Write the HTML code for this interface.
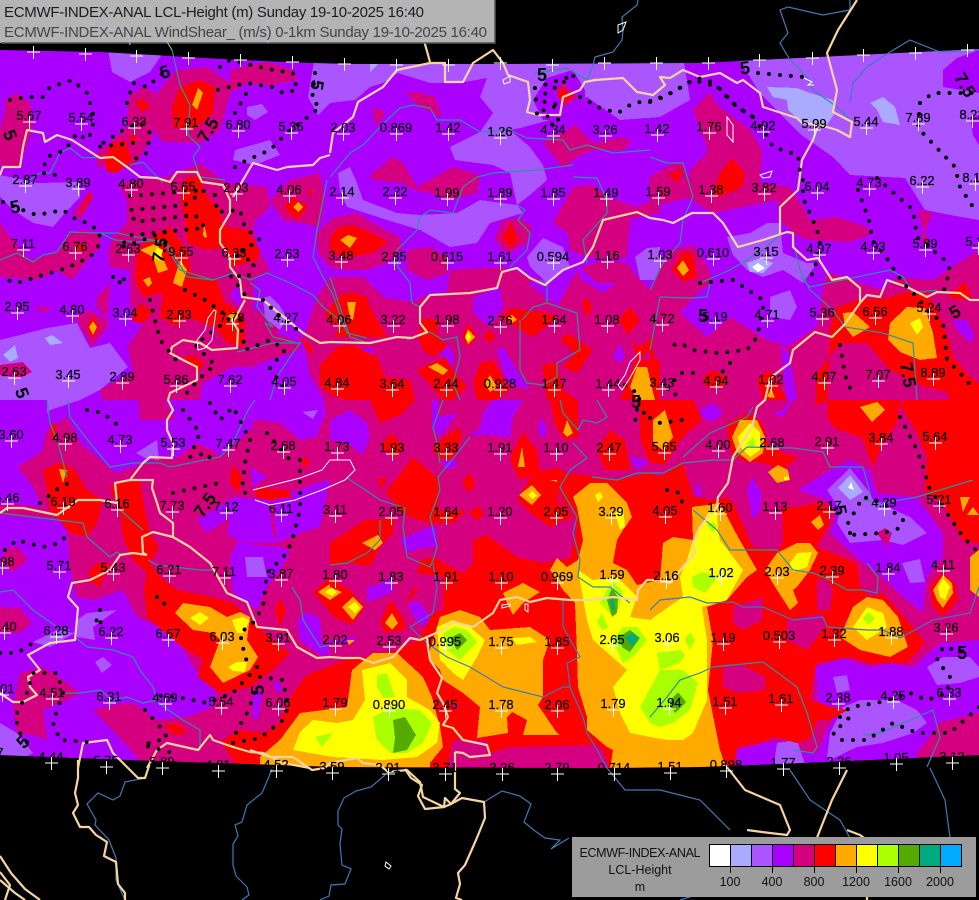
<!DOCTYPE html>
<html><head><meta charset="utf-8"><title>ECMWF-INDEX-ANAL</title>
<style>
html,body{margin:0;padding:0;background:#000;width:979px;height:900px;overflow:hidden}
svg{display:block;position:absolute;left:0;top:0}
text{font-family:"Liberation Sans",sans-serif}
.lb text{font-size:13px;fill:#000;stroke:#000;stroke-width:.2;text-anchor:middle}
.b5 text{font-size:18px;font-weight:bold;fill:#000;text-anchor:middle}
</style></head><body>
<svg width="979" height="900" viewBox="0 0 979 900" xmlns="http://www.w3.org/2000/svg">
<defs><clipPath id="f"><polygon points="0,50 100,52 170,56 240,60 310,63 350,64 500,64 700,63 800,58 900,53 979,49 979,755 800,763 700,767 600,768 340,767 130,760 0,755"/></clipPath></defs>
<rect width="979" height="900" fill="#000"/>
<g clip-path="url(#f)" shape-rendering="crispEdges">
<rect width="979" height="900" fill="#a0f"/>
<g fill="#a5f">
<polygon points="108,50 165,50 150,72 130,82 112,72"/>
<polygon points="0,175 37,183 80,182 80,197 65,213 53,227 33,223 13,210 0,197"/>
<polygon points="0,340 20,335 47,328 77,323 90,348 110,343 128,367 100,390 80,400 50,410 40,420 40,445 0,450"/>
<polygon points="315,55 683,55 690,100 660,117 620,120 587,97 550,120 520,128 510,130 530,147 543,165 547,180 530,195 517,205 480,200 457,213 420,215 397,213 363,200 357,183 350,167 338,173 340,190 347,207 387,220 420,230 450,247 477,243 490,223 523,213 517,205 510,173 493,165 455,160 450,147 480,132 493,113 480,97 487,78 460,83 430,83 398,73 383,83 370,87 355,100 330,103 318,115 308,97"/>
<polygon points="690,50 979,45 979,220 950,215 925,210 905,178 850,175 833,157 800,134 760,93 733,50"/>
<polygon points="527,257 543,238 563,247 570,267 547,283 530,267"/>
<polygon points="635,257 647,248 660,247 660,280 640,280"/>
<polygon points="727,237 750,233 767,223 780,223 783,253 807,263 817,263 803,283 783,270 763,277 747,270 733,255"/>
<polygon points="770,297 790,290 797,307 790,320 770,317"/>
<polygon points="250,150 265,146 278,150 262,162 248,158"/>
<polygon points="235,150 270,140 280,155 255,165 233,160"/>
<polygon points="247,107 262,104 268,112 255,120 247,115"/>
</g>
<g fill="#aaf">
<polygon points="767,87 797,88 810,93 833,100 835,113 827,125 803,123 788,110 787,100 773,97"/>
<polygon points="870,103 883,97 895,107 900,125 883,122 877,110"/>
<polygon points="3,355 15,345 18,358 10,362"/>
<polygon points="45,338 52,335 63,343 50,345"/>
<polygon points="747,263 760,258 773,263 763,273 750,272"/>
<polygon points="370,62 380,62 370,72"/>
</g>
<polygon fill="#fff" points="752,267 758,263 765,268 758,272"/>
<g fill="#a0f">
<polygon points="943,70 957,58 979,50 979,93 943,87"/>
<polygon points="970,117 979,115 979,145 973,135"/>
<polygon points="533,100 547,78 573,70 585,90 585,110 563,120 543,120"/>
</g>
<g fill="#d4007f">
<polygon points="0,503 18,467 40,453 47,430 67,417 80,443 97,457 115,473 147,463 160,457 173,460 197,443 213,450 220,433 233,427 260,420 280,423 300,440 317,437 320,427 326,415 323,397 310,375 303,340 317,297 330,277 363,277 385,298 413,302 427,295 447,292 450,270 503,267 540,280 557,307 573,277 583,267 603,260 627,263 637,277 650,290 660,267 670,250 693,245 708,267 712,283 700,290 680,313 707,337 727,320 730,317 767,340 778,343 787,347 817,327 823,290 827,273 847,277 860,283 883,290 897,277 933,280 979,250 979,770 0,770"/>
<polygon points="157,93 177,70 207,67 230,83 230,70 267,62 293,70 297,80 270,85 247,83 230,93 220,130 200,143 163,142 147,120"/>
<polygon points="130,95 143,87 155,92 152,117 153,137 140,157 133,167 97,167 97,153 113,140 127,127 128,107"/>
<polygon points="5,100 17,93 30,103 33,127 25,150 20,167 0,165 0,130 5,110"/>
<polygon points="270,200 290,180 320,173 325,200 320,227 300,223 283,220"/>
<polygon points="127,200 118,183 167,177 200,163 227,183 267,187 270,207 253,223 257,247 270,270 253,280 253,310 283,317 277,333 300,343 300,350 260,363 253,367 233,367 203,383 200,400 103,400 100,390 133,373 128,347 147,317 130,307 130,270 110,267 108,253 113,237 127,223"/>
<polygon points="0,223 10,237 30,260 57,253 70,232 87,230 100,233 100,247 90,257 72,280 57,270 37,280 0,277"/>
<polygon points="73,213 90,190 93,197 80,220"/>
<polygon points="97,297 110,283 107,317 113,327 97,307"/>
<polygon points="75,317 90,310 107,320 108,327 92,347"/>
<polygon points="33,307 53,307 43,312"/>
<polygon points="0,365 23,362 32,372 20,378 0,375"/>
<polygon points="137,388 150,385 165,400 175,420 140,420"/>
<polygon points="370,175 393,157 403,163 417,187 435,177 453,167 480,175 477,193 450,200 430,193 415,190 402,183 373,180"/>
<polygon points="372,110 378,108 385,113 377,127"/>
<polygon points="405,93 418,92 435,97 442,117 420,107"/>
<polygon points="543,143 575,125 593,143 623,137 632,142 623,150 593,150 577,157 563,168"/>
<polygon points="495,237 503,220 520,218 532,227 527,243 510,253 500,247"/>
<polygon points="553,223 573,187 593,185 607,197 637,207 660,197 660,213 638,217 630,220 627,257 613,260 587,257 570,250 568,233"/>
<polygon points="317,233 333,218 357,213 380,227 400,237 402,250 387,263 367,270 343,270 330,267 318,252"/>
<polygon points="407,250 430,247 447,257 448,273 427,280 407,270"/>
<polygon points="693,110 710,92 717,105 750,130 762,150 760,183 790,187 803,207 810,220 837,217 867,227 870,235 850,242 807,240 793,233 780,220 777,200 743,207 713,213 687,197 690,170 707,153 707,147"/>
<polygon points="650,177 670,165 683,163 693,197 680,200 650,207"/>
<polygon points="917,210 933,213 925,230 930,247 922,243 923,227"/>
<polygon points="555,88 563,83 578,97 565,107"/>
</g>
<g fill="#a0f">
<polygon points="0,400 47,400 47,420 43,450 18,467 33,487 43,507 0,503"/>
<polygon points="0,515 60,520 67,530 70,567 77,597 93,600 123,590 137,617 173,633 200,677 217,693 213,707 187,717 157,720 133,703 113,705 93,710 113,727 147,770 0,770"/>
<polygon points="93,420 113,420 147,437 167,433 173,460 153,457 140,463 117,470 97,457 80,440"/>
<polygon points="230,557 237,543 277,547 283,547 290,553 280,570 267,587 257,610 233,593 230,563"/>
<polygon points="197,520 233,497 270,500 272,530 277,543 240,543 227,533 230,517 207,533"/>
<polygon points="273,500 317,483 330,480 320,527 300,533 277,543"/>
<polygon points="103,400 120,400 120,407 110,417 103,410"/>
<polygon points="200,433 213,430 230,427 233,400 250,400 253,427 240,440 220,457 213,450"/>
<polygon points="250,467 267,477 253,487"/>
<polygon points="330,420 350,410 367,423 370,437 363,455 347,443 330,440"/>
<polygon points="432,400 438,400 438,417 457,413 440,437 432,427"/>
<polygon points="483,413 493,400 523,400 513,417 510,438 493,435 470,435 480,428"/>
<polygon points="540,417 547,427 545,438 538,433"/>
<polygon points="442,462 455,458 457,467 445,470"/>
<polygon points="400,540 417,532 427,528 437,528 437,547 420,548 407,553"/>
<polygon points="367,587 378,585 392,575 393,592 380,597 368,602"/>
<polygon points="408,603 420,602 430,617 427,630 413,617"/>
<polygon points="555,617 563,612 570,630 562,633"/>
<polygon points="630,457 638,458 650,462 637,470"/>
<polygon points="297,620 307,612 320,618 322,643 353,637 357,642 327,643 330,655 320,655 300,640"/>
<polygon points="473,297 500,287 503,307 490,327 473,313"/>
<polygon points="527,283 543,280 557,290 550,303 540,293"/>
<polygon points="580,267 597,283 617,283 603,293 587,283 580,280"/>
<polygon points="357,350 372,347 373,355 362,360"/>
<polygon points="440,353 448,345 455,357 450,370"/>
<polygon points="497,350 503,347 517,370 530,390 507,383"/>
<polygon points="613,357 620,343 625,357 619,363"/>
<polygon points="230,297 237,283 242,297 240,307"/>
<polygon points="815,667 843,658 870,667 890,663 913,667 940,643 979,640 979,713 940,722 933,733 917,753 917,770 737,770 737,750 763,743 787,740 807,753 817,753 827,730 837,713 817,700 817,683"/>
<polygon points="798,490 830,470 850,460 870,470 877,493 917,497 943,533 943,557 927,577 923,613 903,597 877,573 863,563 830,533 837,513 827,500"/>
<polygon points="700,410 713,403 723,413 713,422 703,418"/>
<polygon points="747,490 752,477 762,493 760,510 753,520"/>
<polygon points="695,495 698,480 702,495"/>
<polygon points="773,413 783,410 790,400 793,400 783,417"/>
<polygon points="781,345 790,355 797,400 787,400 782,365"/>
<polygon points="953,320 967,320 975,337 970,343 957,330"/>
<polygon points="253,693 263,690 258,720 252,717"/>
<polygon points="273,683 278,680 283,690 277,693"/>
</g>
<g fill="#a5f">
<polygon points="830,733 843,707 860,700 897,700 917,710 927,723 913,733 883,743 857,747 830,760 827,757"/>
<polygon points="927,667 943,657 970,657 979,667 979,677 960,683 937,685"/>
<polygon points="777,743 797,740 807,770 773,770"/>
<polygon points="833,677 847,675 850,690 837,693"/>
<polygon points="827,490 850,468 870,493 873,500 910,517 927,533 903,545 883,540 850,543 837,523 840,510"/>
<polygon points="902,563 920,559 925,582 910,583"/>
<polygon points="245,557 263,557 267,577 247,577"/>
<polygon points="77,620 87,613 117,610 93,627 95,640 77,637"/>
<polygon points="33,642 57,630 75,633 50,647"/>
<polygon points="95,662 103,657 112,665 102,673"/>
<polygon points="136,453 157,440 159,460 145,458"/>
<polygon points="302,412 318,410 313,419"/>
<polygon points="0,723 17,733 33,753 0,770"/>
<polygon points="263,298 270,296 280,306 287,318 280,330 265,318"/>
</g>
<polygon fill="#aaf" points="838,488 850,475 863,492 850,500"/>
<polygon fill="#fff" points="848,488 851,482 854,490"/>
<g fill="#d4007f">
<polygon points="877,533 885,528 892,533 887,548"/>
<polygon points="20,673 43,667 63,680 80,693 67,700 43,710 47,740 33,735 17,733 13,707"/>
<polygon points="7,548 18,547 28,560 13,572 0,563"/>
<polygon points="0,607 20,608 32,623 20,633 0,633"/>
<polygon points="93,710 113,705 133,703 157,720 187,717 213,707 235,705 240,770 150,770"/>
</g>
<g fill="#f00">
<polygon points="43,470 62,462 75,470 87,490 103,500 97,523 87,537 70,533 50,510 47,490"/>
<polygon points="110,488 117,482 140,480 143,500 150,533 159,547 150,563 160,577 177,590 213,597 233,603 257,627 290,653 273,670 250,687 220,693 198,677 203,660 177,643 147,617 144,590 147,573 133,560 123,537 120,513"/>
<polygon points="88,573 97,563 110,563 100,587 92,583"/>
<polygon points="275,610 280,598 286,610 280,627"/>
<polygon points="230,475 233,465 242,477 238,493 230,483"/>
<polygon points="255,490 263,488 287,490 293,497 270,500 257,498"/>
<polygon points="300,462 305,457 310,462 305,468"/>
<polygon points="50,423 55,423 57,433 52,443"/>
<polygon points="163,725 177,723 188,733 173,735"/>
<polygon points="223,740 240,730 263,733 277,727 293,693 307,675 345,660 367,657 397,650 417,640 433,613 443,610 443,577 417,573 420,560 433,557 463,573 473,563 473,540 487,535 517,557 543,563 570,558 577,527 573,510 563,503 560,487 572,473 590,476 617,480 650,473 660,477 683,463 693,497 713,500 727,497 733,503 753,547 777,550 783,543 782,507 797,507 817,503 830,507 830,523 817,547 857,563 860,587 870,597 883,593 913,627 925,643 907,663 870,663 850,657 817,663 813,677 810,700 832,707 848,710 830,720 817,720 813,733 807,740 797,743 773,737 760,743 737,747 733,770 610,770 603,750 597,745 510,747 490,753 487,740 453,740 447,770 240,770 223,745"/>
<polygon points="330,238 338,227 353,225 380,237 388,242 373,253 350,257 330,253"/>
<polygon points="502,238 511,223 519,240 510,248"/>
<polygon points="325,313 340,295 353,292 367,297 370,307 387,337 333,337 340,327 327,320"/>
<polygon points="320,365 337,347 353,345 377,357 385,377 410,380 415,400 400,415 380,423 370,400 345,400 330,395 320,385"/>
<polygon points="418,337 423,318 438,320 437,333 447,347 433,357 423,350"/>
<polygon points="427,365 445,357 453,370 467,387 453,400 443,400 417,370"/>
<polygon points="462,337 468,323 477,337 468,347"/>
<polygon points="484,337 489,329 495,337 489,344"/>
<polygon points="473,383 480,363 493,360 510,390 497,400 477,400"/>
<polygon points="503,317 510,308 543,312 557,317 533,337 517,328"/>
<polygon points="582,303 587,297 592,307 587,318"/>
<polygon points="618,320 630,307 640,320 628,335"/>
<polygon points="542,365 557,362 563,390 577,400 547,400"/>
<polygon points="560,340 567,333 593,350 577,373 563,367 575,353"/>
<polygon points="632,340 638,347 655,337 650,350 637,360"/>
<polygon points="620,400 635,360 660,360 660,400"/>
<polygon points="550,400 578,400 578,437 565,440 555,425"/>
<polygon points="640,400 693,400 702,420 680,440 665,465 650,463 640,440"/>
<polygon points="597,450 610,430 625,440 630,470 605,470"/>
<polygon points="380,445 392,433 403,447 392,457"/>
<polygon points="432,447 458,427 462,437 452,460 437,457"/>
<polygon points="510,457 523,432 537,450 540,472 520,480 513,467"/>
<polygon points="378,478 387,478 382,490"/>
<polygon points="385,493 413,457 440,480 438,510 467,510 453,523 427,523 410,517 398,510 393,500"/>
<polygon points="462,482 469,473 476,483 469,493"/>
<polygon points="469,513 477,506 484,513 477,521"/>
<polygon points="330,543 365,520 395,518 393,533 380,547 370,567 350,563 330,567"/>
<polygon points="313,592 330,578 350,590 365,607 352,625 335,618"/>
<polygon points="380,623 390,600 405,620 405,630 385,633"/>
<polygon points="405,602 415,587 418,590 408,600"/>
<polygon points="533,472 557,468 570,475 560,487 557,503 567,507 573,517 550,527 530,513 517,500"/>
<polygon points="727,423 747,413 763,423 767,443 783,453 798,457 783,470 763,463 750,462 733,457 727,433"/>
<polygon points="930,587 942,572 955,583 958,600 943,617 933,607"/>
<polygon points="830,327 837,307 857,300 887,298 907,292 927,293 937,310 948,337 953,357 970,377 979,383 979,400 950,400 947,390 917,383 890,370 867,343 840,343 817,373 815,405 830,400 900,400 898,415 897,423 883,443 873,467 862,438 835,428 827,417"/>
<polygon points="917,385 979,383 979,543 963,540 943,503 925,493 927,457 917,433 900,405"/>
<polygon points="947,297 965,282 972,297 960,300"/>
<polygon points="668,175 683,168 678,183"/>
<polygon points="713,193 720,173 732,158 745,173 742,187 720,197"/>
<polygon points="672,270 682,252 693,253 697,277 683,282"/>
<polygon points="702,378 713,370 728,378 723,387 708,388"/>
<polygon points="757,378 770,370 787,400 763,400"/>
<polygon points="650,333 658,377 650,383"/>
<polygon points="172,107 180,87 200,80 215,87 213,113 193,130 173,127"/>
<polygon points="135,103 143,98 150,108 142,112"/>
<polygon points="105,157 113,143 125,140 132,160 117,173 107,172"/>
<polygon points="129,137 133,133 137,140 133,145"/>
<polygon points="180,190 187,177 200,177 207,197 220,210 222,223 227,227 247,230 260,250 257,260 233,267 230,263 227,247 207,250 187,243 185,220 182,207"/>
<polygon points="137,250 157,233 170,227 187,250 192,273 217,280 230,317 213,327 187,317 177,327 160,317 163,293 143,297 135,280"/>
<polygon points="132,313 142,303 152,313 143,323 133,322"/>
<polygon points="215,313 227,303 240,313 245,320 245,347 227,343 217,330"/>
<polygon points="183,357 193,355 205,363 197,372"/>
<polygon points="283,207 293,197 308,207 297,220"/>
<polygon points="308,190 312,190 311,198"/>
<polygon points="80,213 90,193 92,197 82,213"/>
<polygon points="87,327 93,315 99,327 93,338"/>
<polygon points="73,243 88,247 80,252"/>
<polygon points="295,333 312,347 312,355"/>
<polygon points="557,95 563,88 572,97 563,103"/>
<polygon points="385,445 395,440 405,448 395,458"/>
</g>
<g fill="#d4007f">
<polygon points="723,667 743,665 765,677 765,690 737,693 723,687"/>
<polygon points="733,607 763,597 762,620 743,630 733,623"/>
<polygon points="787,620 823,613 825,627 807,650 787,640"/>
<polygon points="817,580 827,580 833,590 830,610 817,610"/>
<polygon points="847,350 867,347 890,372 917,385 947,392 950,400 900,400 855,400 847,375"/>
<polygon points="453,703 460,705 455,710"/>
</g>
<g fill="#fa0">
<polygon points="59,469 67,470 63,483"/>
<polygon points="175,613 183,603 210,607 227,617 240,612 250,617 247,640 258,657 250,670 223,683 210,667 220,640 213,633 193,630"/>
<polygon points="260,757 280,740 300,713 347,707 352,670 373,653 397,653 423,677 432,697 440,727 443,747 430,763 430,770 260,770"/>
<polygon points="430,650 440,617 460,610 480,617 490,630 530,627 550,640 543,660 543,683 543,697 538,705 557,733 560,735 523,735 527,720 512,712 507,717 508,733 477,738 480,707 463,693 443,680 440,670 430,660"/>
<polygon points="503,593 523,583 540,592 523,603 513,615 507,603"/>
<polygon points="550,570 557,558 567,567 578,560 583,540 577,507 573,497 590,483 607,483 627,503 632,517 623,530 617,540 613,563 627,570 637,585 660,580 663,543 673,537 693,540 692,507 707,505 720,503 738,537 757,570 747,577 727,600 707,607 713,640 708,690 720,750 727,770 610,770 613,750 607,747 587,730 587,717 578,687 577,653 575,603 563,590"/>
<polygon points="765,570 777,553 797,543 810,543 818,553 810,570 797,587 793,590 798,603 790,610 777,590"/>
<polygon points="768,472 778,465 788,470 790,480 777,483"/>
<polygon points="811,522 820,515 824,525 818,530"/>
<polygon points="732,437 740,420 757,420 765,437 763,453 750,462 737,452"/>
<polygon points="840,637 853,607 867,597 883,600 898,617 908,647 890,657 860,650"/>
<polygon points="933,590 943,575 952,583 953,593 943,608 937,600"/>
<polygon points="860,407 877,402 885,410 872,422"/>
<polygon points="960,497 970,497 963,512"/>
<polygon points="967,515 973,507 979,515"/>
<polygon points="970,557 979,550 979,597 970,590"/>
<polygon points="888,340 890,323 907,307 925,308 933,333 937,358 920,360 900,352"/>
<polygon points="843,313 853,312 870,327 853,337 845,327"/>
<polygon points="340,240 348,235 357,238 350,248"/>
<polygon points="347,302 356,302 353,320 350,318"/>
<polygon points="428,367 437,363 448,370 443,375"/>
<polygon points="465,337 468,329 475,337 468,344"/>
<polygon points="485,383 490,375 497,387 490,392"/>
<polygon points="507,318 512,315 517,320 512,323"/>
<polygon points="630,387 637,367 647,367 655,400 637,400"/>
<polygon points="563,433 567,420 573,433 567,437"/>
<polygon points="653,420 665,410 673,437 663,450 653,443"/>
<polygon points="518,467 522,447 525,467"/>
<polygon points="362,543 378,535 383,543 375,550"/>
<polygon points="330,587 342,592 330,600 318,592 330,584"/>
<polygon points="342,607 353,597 363,607 353,620"/>
<polygon points="385,623 392,613 398,623 392,630"/>
<polygon points="519,495 532,485 541,495 532,505"/>
<polygon points="550,480 557,480 557,482"/>
<polygon points="677,268 683,260 689,270 683,276"/>
<polygon points="767,397 771,388 775,398"/>
<polygon points="192,105 198,88 203,93 197,110"/>
<polygon points="203,235 204,223 207,237 205,238"/>
<polygon points="140,250 157,243 163,258 168,270 158,273 153,257"/>
<polygon points="143,280 150,277 152,283 148,287"/>
<polygon points="173,283 180,260 187,270 182,287"/>
<polygon points="227,317 233,312 238,317 232,323"/>
<polygon points="293,207 298,202 303,207 298,212"/>
<polygon points="89,327 93,321 97,327 93,335"/>
<polygon points="347,640 355,640 349,645"/>
</g>
<g fill="#ff0">
<polygon points="190,618 200,612 209,618 200,625"/>
<polygon points="232,620 243,617 250,620 243,633 237,633"/>
<polygon points="228,667 237,662 247,662 245,672 233,671"/>
<polygon points="293,750 300,732 313,720 337,723 353,720 365,700 362,670 390,663 407,680 407,697 430,710 440,723 437,743 417,757 383,760 333,757"/>
<polygon points="437,627 453,620 470,627 485,640 477,657 463,680 453,673 440,660"/>
<polygon points="512,638 530,637 537,642 517,645"/>
<polygon points="578,570 593,580 617,577 630,590 637,597 630,617 650,620 683,597 680,577 687,560 693,540 710,510 717,510 718,530 720,540 743,570 727,600 702,607 707,640 707,700 693,733 683,740 667,740 650,737 630,733 620,713 613,687 627,670 593,640 587,620"/>
<polygon points="595,495 600,492 603,497 598,502"/>
<polygon points="615,513 623,507 625,527 620,530"/>
<polygon points="790,563 797,553 812,552 807,567 793,572"/>
<polygon points="738,437 750,423 760,432 760,450 750,457 740,447"/>
<polygon points="853,627 867,607 883,613 887,627 867,640"/>
<polygon points="938,587 943,578 950,587 945,600 940,597"/>
<polygon points="910,323 920,318 923,327 917,335"/>
<polygon points="153,257 157,247 163,250 160,260"/>
<polygon points="468,332 471,337 468,342 465,337"/>
<polygon points="348,607 355,602 360,608 355,613"/>
<polygon points="325,592 332,588 337,592 332,596"/>
<polygon points="528,495 532,491 537,496 532,499"/>
<polygon points="784,477 789,476 789,480 784,480"/>
</g>
<g fill="#af0">
<polygon points="315,737 333,733 322,747"/>
<polygon points="377,675 387,673 395,697 383,698 377,687"/>
<polygon points="373,717 390,708 420,710 432,723 423,743 407,753 390,753 377,740"/>
<polygon points="443,633 455,627 467,630 477,642 460,660 447,650"/>
<polygon points="607,590 613,582 623,592 618,610 613,617 600,603"/>
<polygon points="597,622 602,613 608,628 602,630"/>
<polygon points="613,640 623,627 637,627 647,640 633,657 623,663"/>
<polygon points="640,707 660,670 683,670 698,683 690,710 673,723 660,727 650,723"/>
<polygon points="657,653 680,650 685,655 680,663 660,670"/>
<polygon points="685,640 690,632 695,640 690,650"/>
<polygon points="692,577 703,572 718,577 705,593 693,587"/>
<polygon points="707,525 713,522 718,527 712,532"/>
<polygon points="747,443 753,437 756,445 750,448"/>
<polygon points="863,618 868,612 875,618 868,625"/>
</g>
<g fill="#5a0">
<polygon points="393,720 405,717 416,735 407,750 393,753 395,738"/>
<polygon points="450,638 460,633 467,640 457,650"/>
<polygon points="668,703 678,692 686,702 675,713"/>
<polygon points="607,600 612,588 618,597 617,613 612,617"/>
<polygon points="617,638 630,630 640,638 630,652 623,648"/>
</g>
<g fill="#00aa7f">
<polygon points="610,600 613,597 615,610 612,610"/>
<polygon points="625,637 633,633 638,638 632,647"/>
</g>
</g>
<!-- dark rivers over black -->
<g fill="none" stroke="#3f7ab5" stroke-width="1.2">
<polyline points="145,778 125,782 120,796 113,800 98,793 87,804 96,820 95,825 109,840 116,858 116,880 125,900"/>
<polyline points="273,767 262,793 247,805 242,822 235,825 238,836 233,844 233,865 236,876 247,887 249,895 242,900"/>
<polyline points="385,775 371,787 356,791 344,798 338,811 338,825 342,829 340,844 342,865 351,869 345,884 331,885 329,896 320,900"/>
<polyline points="484,802 502,791 520,796 531,804 524,822 535,831 545,838 560,840 551,849 569,838"/>
<polyline points="593,65 595,57 613,52 622,40 623,30 622,17 637,5 638,0"/>
<polyline points="790,60 780,43 788,33 780,10 788,7 823,15 850,10 850,0"/>
<polyline points="850,103 853,83 867,67 890,52 910,40 940,52 979,50"/>
<polyline points="607,768 625,790 660,790 700,800 730,830"/>
<polyline points="790,770 810,800 840,820 850,838"/>
<polyline points="930,768 945,800 950,838"/>
<polyline points="690,897 680,900"/>
</g>
<!-- rivers over field -->
<g fill="none" stroke="#2f8f9f" stroke-width="1.2">
<polyline points="172,50 180,85 190,105 188,135 200,147 193,157 200,177 225,180"/>
<polyline points="330,177 350,153 363,145 390,117 400,108 413,105 430,108 437,120 460,120 480,132 510,130 527,138 563,140 570,150 587,145 613,153 650,150"/>
<polyline points="535,73 567,68 587,80 593,65"/>
<polyline points="420,217 430,210 453,213 463,187 477,177 493,173 537,170 573,165"/>
<polyline points="573,177 597,178 607,200 607,213 583,240 587,263"/>
<polyline points="420,217 417,230 397,250 398,267 410,283 412,303 420,307"/>
<polyline points="517,205 525,210 518,220 530,233 527,250 510,267"/>
<polyline points="330,277 340,307 350,337 367,343"/>
<polyline points="407,340 430,332 443,340 457,337 460,357 453,383 460,400"/>
<polyline points="520,320 520,370 527,383 543,385 557,377 557,363 580,350 577,313 547,303 547,283 540,280"/>
<polyline points="522,320 533,307 547,303"/>
<polyline points="100,233 117,233 167,243 187,277 213,280 233,273 250,280 267,273 290,283 313,295 323,307 343,323 347,333 367,338"/>
<polyline points="0,260 17,253 33,262 43,255 57,252 70,232 100,233 115,240 137,242 163,240 180,270 213,280"/>
<polyline points="25,183 40,173 50,173 60,153 70,148 83,158 100,157"/>
<polyline points="130,165 143,162 163,183"/>
<polyline points="327,180 317,230 313,257 323,277 333,295 343,323"/>
<polyline points="237,352 273,343 300,343 290,357 277,377 270,400"/>
<polyline points="250,283 260,290 257,307 273,327 265,323 273,337 297,343"/>
<polyline points="47,400 50,423 58,443 63,462 67,478"/>
<polyline points="68,400 70,417 90,443 110,467 133,463 160,463 170,467 220,457 233,443 248,410 255,400"/>
<polyline points="0,513 83,523 87,537 110,557 117,552 122,555"/>
<polyline points="120,510 143,530"/>
<polyline points="148,560 157,565 200,570 213,570"/>
<polyline points="0,592 13,590 33,610 57,627 70,630"/>
<polyline points="75,637 87,647 113,650 133,657 140,670 153,687 157,700 143,703 127,697 113,700 100,690 80,693 63,693"/>
<polyline points="157,702 183,720 200,730 200,750"/>
<polyline points="292,587 300,600 303,620 320,647 330,645"/>
<polyline points="347,478 370,493 380,500 405,508 403,527 407,557 430,567 433,560 437,547 430,517 440,490 438,477 460,450 470,437"/>
<polyline points="443,400 433,427 437,443 440,463"/>
<polyline points="380,520 380,540 367,553 347,563 330,565"/>
<polyline points="560,400 563,413 578,430 583,420 597,423 607,417 597,400"/>
<polyline points="573,443 587,458 570,470 560,487 577,517 573,533 580,560 578,577 593,587 610,587 630,603"/>
<polyline points="592,477 617,480 637,473 660,473"/>
<polyline points="650,473 663,473 683,463 713,460 733,460 747,447 793,448 823,452 830,467 863,467 870,493 863,500 883,503 917,497 973,480"/>
<polyline points="683,457 710,433 747,417 753,407"/>
<polyline points="693,510 717,530 730,550 777,550 793,570 813,573 830,580 847,590 863,590 877,593 878,577 867,563"/>
<polyline points="650,717 667,697 680,680 700,673 713,667 763,662 797,687 807,713 817,747 813,753 793,750"/>
<polyline points="863,735 880,733 910,720 933,710 940,737 927,767"/>
<polyline points="650,157 667,163 683,163 693,197 683,220 680,243 663,263 650,290"/>
<polyline points="700,283 730,270 763,250 780,235"/>
<polyline points="793,240 800,270 810,290 833,310 845,327 883,333 913,343 917,400"/>
<polyline points="800,277 810,287 890,270 903,277 913,293 937,290"/>
<polyline points="710,283 707,297 690,298 660,297 650,350"/>
<polyline points="790,60 807,77 813,90 837,107 850,120"/>
</g>
<g fill="none" stroke="#3d78b8" stroke-width="1.2">
<polyline points="433,563 437,587 433,613 410,627 427,643 447,657 470,667 503,687 543,697 563,687 570,687 567,663 580,657 563,627 563,600"/>
<polyline points="570,687 583,717 587,733 597,750 607,768"/>
<polyline points="650,610 660,600 690,597 707,603 733,602 743,607 763,607 793,620 823,617 827,627 867,630 883,630 900,638 933,620 970,613 979,587"/>
</g>
<!-- country borders -->
<g fill="none" stroke="#f5d5a0" stroke-width="2.2" stroke-linejoin="round">
<polyline points="0,175 3,167 20,167 23,147 27,130 43,133 45,142 57,135 72,140 100,158 113,157 127,167 140,177 157,178 170,182 177,172 197,172 202,182 223,185 230,200 230,213 220,230 220,243 230,257 230,267 240,280 242,297 263,300 290,322 303,333 320,343 330,342 370,343 397,337 412,338 427,332 420,323 420,307 430,295 470,293 497,288 502,272 517,268 530,278 545,285 563,270 583,262 593,247 603,220 637,212 650,218 663,220 673,223 692,213 713,213 723,223 738,247 763,240 787,232 793,233 793,247 807,260 818,258 832,280 847,277 860,288 860,303 867,295 880,297 887,280 907,287 927,297 937,292 960,293 970,300 979,300"/>
<polyline points="845,324 860,303"/>
<polyline points="845,324 832,337 815,332 793,350 790,363 770,378 765,400 757,407 752,427 733,457 728,483 718,497 717,507 700,527 693,543 695,553 683,567 670,583 660,580 647,580 638,590 637,600 613,597 590,600 570,600 547,598 530,602 517,597 500,600 493,613 473,627 453,622 443,630 420,640 410,638 393,657 373,663 360,658 343,658 330,657 317,658 297,647 287,630 257,627 253,617 247,602 227,593 210,563 190,547 173,537 173,523 160,513 157,503 152,488 153,480 130,480 115,483 117,503 100,500 78,500 57,515 23,508 7,508 0,513"/>
<polyline points="130,480 143,463 150,457 172,458 173,443 167,430 167,420 173,410 168,400 170,393 197,380 197,367 183,360 170,353 172,347 183,340 200,343 212,350 237,348 238,330 233,322 245,300"/>
<polyline points="147,555 133,553 120,555 110,570 90,580 72,583 68,597 78,608 75,640 50,643 28,655 40,670 28,677 30,687 37,695 23,702 13,702 0,693"/>
<polyline points="173,537 153,532 142,537 143,553 147,555"/>
<polyline points="78,768 83,743 107,740 113,753 128,768 138,778 145,778 151,760"/>
<polyline points="78,760 78,778 75,793 78,805 73,813 80,827 89,827 96,835 107,842 104,856 116,862 118,884 125,893 125,900"/>
<polyline points="147,768 157,750 167,743 198,750 210,735 213,740 233,747 250,752 263,753 283,763 310,768"/>
<polyline points="250,750 270,757 293,757 312,770 325,768 330,763 357,758 363,763 380,765 388,772 407,770 420,782 423,797 444,807 451,804 462,798 484,802 485,818 476,840 465,865 458,873 460,884 456,898 462,900"/>
<polyline points="455,752 455,789 460,793 451,804 445,798 444,807 425,809 418,796 422,785 411,778 405,769"/>
<polyline points="455,752 463,753 470,757 490,755 487,745 463,740 453,728 443,725 448,717 443,703 437,693 442,678 430,660 428,647 427,638"/>
<polyline points="330,155 320,158 313,165 287,167 277,170 253,163 233,197"/>
<polyline points="330,153 333,133 353,117 358,102 383,87 397,70 430,63 445,63 445,82 463,82 473,63 493,50 503,63 508,75 528,82 530,100 527,112 538,115 560,115 563,97 580,90 585,82 595,80 623,78 637,92 653,95 665,85 660,77 670,78 683,70 700,77 720,73 737,83 743,80 760,93 763,107 797,118 802,123 818,125 813,140 802,160 798,190 780,207 780,235"/>
<polyline points="405,0 410,15 423,37 430,62"/>
<polyline points="820,125 837,130 850,137 852,122 833,112 837,90 827,53 838,30 857,0"/>
<polyline points="0,856 11,873 25,889 40,900"/>
<polyline points="0,880 15,893 25,900"/>
<polyline points="0,872 10,885 5,900"/>
<polyline points="727,767 745,790 780,805 790,830 787,835 770,833 747,830"/>
<polyline points="815,843 820,830 832,800 847,770"/>
<polyline points="847,830 860,835 867,840 868,843"/>
<polyline points="867,897 867,900"/>
</g>
<!-- contour dots -->
<g fill="none" stroke="#000" stroke-width="4" stroke-linecap="round" stroke-linejoin="round" stroke-dasharray="0 11">
<polyline points="10,100 27,97 43,97 50,87 72,80 87,93 93,113 93,130 87,140 77,133 65,150 47,157 42,173 55,175"/>
<polyline points="127,103 133,83 147,87 163,73"/>
<polyline points="220,67 230,60 273,70 293,73 297,90 283,93 272,87 247,83 217,90"/>
<polyline points="235,113 247,92"/>
<polyline points="315,73 312,100 320,107 313,113 287,133 270,150 247,160 230,170"/>
<polyline points="133,143 97,147 123,130 140,123 150,133 147,153 127,163"/>
<polyline points="3,202 30,213 37,215 63,210 77,220 88,223 100,232 98,247 90,257 67,268 43,275 17,283 0,278"/>
<polyline points="113,277 127,280 117,283"/>
<polyline points="263,300 287,323 303,333"/>
<polyline points="130,196 205,190 185,205 130,210 135,222 195,215 205,228 130,235 120,248 165,232 165,246"/>
<polyline points="215,195 217,212 240,210 245,228 260,240 235,255 255,262 248,277 230,275 245,295"/>
<polyline points="185,290 205,300 230,318 195,345 215,365 200,378 185,395"/>
<polyline points="150,300 160,340 180,365"/>
<polyline points="240,320 245,350 270,340 285,350 270,368 285,390"/>
<polyline points="650,102 673,92 693,80 718,87 737,107 753,117 768,137 773,147 798,155 800,172 803,180 803,198 810,213 817,230 820,240 818,257 813,273 807,282"/>
<polyline points="758,73 803,77"/>
<polyline points="580,97 600,108 618,113 633,103 657,100 673,92 697,78 713,82 725,95 737,107 753,117"/>
<polyline points="535,88 560,80 575,75 535,100 560,105 535,113 560,120 545,128"/>
<polyline points="920,103 933,93 967,93 979,93"/>
<polyline points="920,103 918,128 937,148 955,167 960,187 973,207"/>
<polyline points="858,190 870,223 872,240 888,260 902,282 917,297 930,313 943,323 947,360 960,373 972,387"/>
<polyline points="877,178 913,210 917,237 947,262 950,270 943,293"/>
<polyline points="700,283 733,280 763,300 763,310 757,337 747,350 717,353 693,350 680,343 667,347"/>
<polyline points="693,373 680,373 667,390 680,397"/>
<polyline points="730,363 717,378"/>
<polyline points="840,345 845,375 852,393"/>
<polyline points="900,417 917,450 923,467 930,490 940,503 963,537 979,553"/>
<polyline points="850,533 847,525 863,497 883,503 903,520 900,528 883,533 850,535"/>
<polyline points="667,490 680,493 683,507"/>
<polyline points="650,418 660,423 683,420 690,415"/>
<polyline points="840,717 850,707 877,703 910,693 927,700 947,693 950,677 937,660 943,647 970,653"/>
<polyline points="979,707 950,733 917,733 893,723 867,740 840,740 833,733 850,717"/>
<polyline points="5,550 17,540 43,547 60,543 65,537"/>
<polyline points="0,653 17,653 33,643"/>
<polyline points="300,460 300,510 293,537 287,553 267,573 263,607 253,623 240,633 245,657 250,667"/>
<polyline points="257,667 233,693 207,703 177,697 153,695"/>
<polyline points="145,710 163,730 167,738 143,745 173,753"/>
<polyline points="260,677 283,680 288,707 283,720 260,738 233,743 237,730 247,713 257,687"/>
<polyline points="30,683 33,673 57,673 63,693 53,723 60,740 87,742"/>
<polyline points="27,693 15,717 20,733 33,750"/>
<polyline points="40,503 60,487 77,480"/>
<polyline points="87,410 103,413 120,427"/>
<polyline points="183,410 200,433 190,457 207,453 213,463"/>
<polyline points="210,403 220,420 233,407 250,440"/>
<polyline points="250,440 245,463 242,490 253,500"/>
<polyline points="173,493 200,487 220,483"/>
<polyline points="267,433 290,460"/>
<polyline points="157,597 165,603 157,610"/>
<polyline points="100,610 95,625 105,620"/>
<polyline points="625,385 640,395 635,420 645,412"/>
</g>
<g class="b5">
<text x="165" y="78" transform="rotate(-20 165 72)">5</text>
<text x="317" y="91" transform="rotate(100 317 85)">5</text>
<text x="10" y="141" transform="rotate(70 10 135)">5</text>
<text x="15" y="213" transform="rotate(-10 15 207)">5</text>
<text x="208" y="136" transform="rotate(-60 208 130)">7.5</text>
<text x="542" y="81">5</text>
<text x="745" y="74" transform="rotate(-5 745 68)">5</text>
<text x="965" y="91" transform="rotate(60 965 85)">7.5</text>
<text x="955" y="318" transform="rotate(-30 955 312)">5</text>
<text x="908" y="381" transform="rotate(80 908 375)">7.5</text>
<text x="703" y="322">5</text>
<text x="840" y="516" transform="rotate(80 840 510)">5</text>
<text x="962" y="659">5</text>
<text x="205" y="511" transform="rotate(-55 205 505)">7.5</text>
<text x="22" y="399" transform="rotate(70 22 393)">5</text>
<text x="258" y="696" transform="rotate(-90 258 690)">5</text>
<text x="23" y="748" transform="rotate(-45 23 742)">5</text>
<text x="636" y="408">5</text>
<text x="160" y="256" transform="rotate(-80 160 250)">7.5</text>
</g>
<g class="lb">
<text x="29" y="120">5.67</text><text x="81" y="122">5.54</text><text x="134" y="126">6.33</text><text x="186" y="127">7.91</text><text x="238" y="129">6.80</text><text x="291" y="131">5.36</text><text x="343" y="132">2.03</text><text x="396" y="132">0.869</text><text x="448" y="132">1.42</text><text x="500" y="136">1.26</text><text x="553" y="134">4.34</text><text x="605" y="134">3.26</text><text x="657" y="133">1.42</text><text x="709" y="131">1.76</text><text x="763" y="130">4.92</text><text x="814" y="128">5.99</text><text x="866" y="126">5.44</text><text x="918" y="122">7.89</text><text x="972" y="119">8.22</text>
<text x="25" y="184">2.87</text><text x="78" y="187">3.89</text><text x="131" y="188">4.80</text><text x="183" y="191">6.65</text><text x="236" y="192">2.03</text><text x="289" y="194">4.06</text><text x="342" y="196">2.14</text><text x="395" y="196">2.22</text><text x="447" y="197">1.99</text><text x="500" y="197">1.89</text><text x="553" y="197">1.85</text><text x="606" y="197">1.49</text><text x="658" y="196">1.59</text><text x="711" y="194">1.38</text><text x="764" y="192">3.82</text><text x="817" y="191">6.04</text><text x="869" y="187">4.73</text><text x="922" y="185">6.22</text><text x="975" y="182">8.14</text>
<text x="23" y="248">7.11</text><text x="75" y="251">6.76</text><text x="128" y="253">2.63</text><text x="181" y="256">9.55</text><text x="234" y="257">6.33</text><text x="287" y="258">2.63</text><text x="341" y="260">3.48</text><text x="394" y="261">2.85</text><text x="447" y="261">0.615</text><text x="500" y="261">1.61</text><text x="553" y="261">0.594</text><text x="607" y="260">1.16</text><text x="660" y="259">1.03</text><text x="713" y="257">0.610</text><text x="766" y="256">3.15</text><text x="819" y="253">4.97</text><text x="873" y="251">4.93</text><text x="925" y="248">5.89</text><text x="978" y="246">5.17</text>
<text x="17" y="311">2.95</text><text x="72" y="314">4.80</text><text x="125" y="317">3.04</text><text x="179" y="319">2.83</text><text x="232" y="322">7.78</text><text x="286" y="322">4.27</text><text x="339" y="324">4.06</text><text x="393" y="324">3.22</text><text x="447" y="324">1.98</text><text x="500" y="325">2.76</text><text x="554" y="324">1.64</text><text x="607" y="324">1.08</text><text x="662" y="323">4.72</text><text x="715" y="321">5.19</text><text x="767" y="319">4.71</text><text x="822" y="317">5.36</text><text x="875" y="316">6.56</text><text x="929" y="312">5.24</text>
<text x="14" y="376">2.63</text><text x="68" y="379">3.45</text><text x="122" y="381">2.89</text><text x="176" y="384">5.86</text><text x="230" y="384">7.62</text><text x="284" y="386">4.05</text><text x="337" y="387">4.84</text><text x="392" y="388">3.64</text><text x="446" y="388">2.44</text><text x="500" y="388">0.928</text><text x="554" y="388">1.47</text><text x="608" y="388">1.44</text><text x="662" y="387">3.43</text><text x="716" y="385">4.94</text><text x="771" y="384">1.02</text><text x="824" y="381">4.07</text><text x="878" y="379">7.07</text><text x="933" y="377">8.89</text>
<text x="11" y="439">3.60</text><text x="65" y="442">4.98</text><text x="120" y="444">4.73</text><text x="173" y="447">5.53</text><text x="228" y="448">7.47</text><text x="283" y="450">2.68</text><text x="337" y="451">1.73</text><text x="392" y="452">1.93</text><text x="446" y="452">3.33</text><text x="500" y="452">1.91</text><text x="556" y="452">1.10</text><text x="609" y="452">2.47</text><text x="664" y="451">5.65</text><text x="718" y="449">4.00</text><text x="772" y="447">2.68</text><text x="827" y="446">2.91</text><text x="881" y="442">3.84</text><text x="935" y="441">5.64</text>
<text x="7" y="502">5.46</text><text x="63" y="506">6.19</text><text x="117" y="508">6.16</text><text x="172" y="510">7.73</text><text x="226" y="511">7.12</text><text x="281" y="513">6.11</text><text x="335" y="514">3.11</text><text x="391" y="516">2.05</text><text x="446" y="516">1.64</text><text x="500" y="516">1.20</text><text x="556" y="516">2.05</text><text x="611" y="516">3.29</text><text x="665" y="515">4.05</text><text x="720" y="512">1.60</text><text x="775" y="511">1.13</text><text x="829" y="510">2.17</text><text x="884" y="507">4.29</text><text x="939" y="504">5.21</text>
<text x="2" y="566">4.98</text><text x="59" y="570">5.71</text><text x="113" y="572">5.43</text><text x="169" y="574">6.21</text><text x="224" y="576">7.11</text><text x="281" y="578">3.87</text><text x="335" y="579">1.80</text><text x="391" y="581">1.83</text><text x="446" y="581">1.91</text><text x="501" y="581">1.10</text><text x="557" y="581">0.969</text><text x="612" y="579">1.59</text><text x="666" y="580">2.16</text><text x="721" y="577">1.02</text><text x="777" y="576">2.03</text><text x="832" y="575">2.39</text><text x="888" y="572">1.84</text><text x="943" y="569">4.11</text>
<text x="4" y="631">5.40</text><text x="56" y="635">6.28</text><text x="111" y="636">6.22</text><text x="168" y="638">6.67</text><text x="222" y="641">6.03</text><text x="278" y="642">3.91</text><text x="335" y="644">2.02</text><text x="389" y="645">2.53</text><text x="445" y="646">0.995</text><text x="501" y="646">1.75</text><text x="557" y="646">1.85</text><text x="612" y="644">2.65</text><text x="667" y="642">3.06</text><text x="723" y="642">1.19</text><text x="779" y="640">0.503</text><text x="834" y="638">1.32</text><text x="891" y="636">1.88</text><text x="946" y="632">3.26</text>
<text x="2" y="693">5.01</text><text x="52" y="697">4.51</text><text x="109" y="701">6.31</text><text x="165" y="702">4.69</text><text x="221" y="706">5.54</text><text x="278" y="707">6.06</text><text x="335" y="707">1.79</text><text x="389" y="709">0.890</text><text x="445" y="709">2.45</text><text x="501" y="709">1.78</text><text x="557" y="709">2.06</text><text x="613" y="708">1.79</text><text x="669" y="707">1.94</text><text x="725" y="706">1.51</text><text x="781" y="703">1.61</text><text x="838" y="702">2.38</text><text x="893" y="700">4.25</text><text x="949" y="697">6.33</text>
<text x="0" y="757">7</text><text x="51" y="761">4.44</text><text x="106" y="765">5.75</text><text x="162" y="766">5.89</text><text x="218" y="769">4.81</text><text x="276" y="769">4.52</text><text x="332" y="771">3.59</text><text x="388" y="772">2.01</text><text x="445" y="772">3.71</text><text x="502" y="772">3.26</text><text x="557" y="772">2.79</text><text x="614" y="772">0.714</text><text x="670" y="771">1.51</text><text x="726" y="769">0.898</text><text x="783" y="767">1.77</text><text x="839" y="766">2.36</text><text x="896" y="762">1.05</text><text x="952" y="761">3.12</text>
</g>
<path fill="none" stroke="#fff" stroke-width="1.2" shape-rendering="crispEdges" d="M27 52h13M33.500 46v13M79 54h13M85.500 48v13M130 56h13M136.500 50v13M182 58h13M188.500 52v13M234 60h13M240.500 54v13M286 62h13M292.500 56v13M338 64h13M344.500 58v13M390 65h13M396.500 59v13M442 65h13M448.500 59v13M494 63h13M500.500 57v13M546 65h13M552.500 59v13M598 63h13M604.500 57v13M650 63h13M656.500 57v13M702 63h13M708.500 57v13M753 60h13M759.500 54v13M806 58h13M812.500 52v13M857 55h13M863.500 49v13M909 53h13M915.500 47v13M961 50h13M967.500 44v13
M23 122h13M29.500 116v13M75 124h13M81.500 118v13M128 128h13M134.500 122v13M180 129h13M186.500 123v13M232 131h13M238.500 125v13M285 133h13M291.500 127v13M337 134h13M343.500 128v13M390 134h13M396.500 128v13M442 134h13M448.500 128v13M494 138h13M500.500 132v13M547 136h13M553.500 130v13M599 136h13M605.500 130v13M651 135h13M657.500 129v13M703 133h13M709.500 127v13M757 132h13M763.500 126v13M808 130h13M814.500 124v13M860 128h13M866.500 122v13M912 124h13M918.500 118v13M966 121h13M972.500 115v13
M19 186h13M25.500 180v13M72 189h13M78.500 183v13M125 190h13M131.500 184v13M177 193h13M183.500 187v13M230 194h13M236.500 188v13M283 196h13M289.500 190v13M336 198h13M342.500 192v13M389 198h13M395.500 192v13M441 199h13M447.500 193v13M494 199h13M500.500 193v13M547 199h13M553.500 193v13M600 199h13M606.500 193v13M652 198h13M658.500 192v13M705 196h13M711.500 190v13M758 194h13M764.500 188v13M811 193h13M817.500 187v13M863 189h13M869.500 183v13M916 187h13M922.500 181v13M969 184h13M975.500 178v13
M17 250h13M23.500 244v13M69 253h13M75.500 247v13M122 255h13M128.500 249v13M175 258h13M181.500 252v13M228 259h13M234.500 253v13M281 260h13M287.500 254v13M335 262h13M341.500 256v13M388 263h13M394.500 257v13M441 263h13M447.500 257v13M494 263h13M500.500 257v13M547 263h13M553.500 257v13M601 262h13M607.500 256v13M654 261h13M660.500 255v13M707 259h13M713.500 253v13M760 258h13M766.500 252v13M813 255h13M819.500 249v13M867 253h13M873.500 247v13M919 250h13M925.500 244v13M972 248h13M978.500 242v13
M11 313h13M17.500 307v13M66 316h13M72.500 310v13M119 319h13M125.500 313v13M173 321h13M179.500 315v13M226 324h13M232.500 318v13M280 324h13M286.500 318v13M333 326h13M339.500 320v13M387 326h13M393.500 320v13M441 326h13M447.500 320v13M494 327h13M500.500 321v13M548 326h13M554.500 320v13M601 326h13M607.500 320v13M656 325h13M662.500 319v13M709 323h13M715.500 317v13M761 321h13M767.500 315v13M816 319h13M822.500 313v13M869 318h13M875.500 312v13M923 314h13M929.500 308v13
M8 378h13M14.500 372v13M62 381h13M68.500 375v13M116 383h13M122.500 377v13M170 386h13M176.500 380v13M224 386h13M230.500 380v13M278 388h13M284.500 382v13M331 389h13M337.500 383v13M386 390h13M392.500 384v13M440 390h13M446.500 384v13M494 390h13M500.500 384v13M548 390h13M554.500 384v13M602 390h13M608.500 384v13M656 389h13M662.500 383v13M710 387h13M716.500 381v13M765 386h13M771.500 380v13M818 383h13M824.500 377v13M872 381h13M878.500 375v13M927 379h13M933.500 373v13
M5 441h13M11.500 435v13M59 444h13M65.500 438v13M114 446h13M120.500 440v13M167 449h13M173.500 443v13M222 450h13M228.500 444v13M277 452h13M283.500 446v13M331 453h13M337.500 447v13M386 454h13M392.500 448v13M440 454h13M446.500 448v13M494 454h13M500.500 448v13M550 454h13M556.500 448v13M603 454h13M609.500 448v13M658 453h13M664.500 447v13M712 451h13M718.500 445v13M766 449h13M772.500 443v13M821 448h13M827.500 442v13M875 444h13M881.500 438v13M929 443h13M935.500 437v13
M1 504h13M7.500 498v13M57 508h13M63.500 502v13M111 510h13M117.500 504v13M166 512h13M172.500 506v13M220 513h13M226.500 507v13M275 515h13M281.500 509v13M329 516h13M335.500 510v13M385 518h13M391.500 512v13M440 518h13M446.500 512v13M494 518h13M500.500 512v13M550 518h13M556.500 512v13M605 518h13M611.500 512v13M659 517h13M665.500 511v13M714 514h13M720.500 508v13M769 513h13M775.500 507v13M823 512h13M829.500 506v13M878 509h13M884.500 503v13M933 506h13M939.500 500v13
M-4 568h13M2.500 562v13M53 572h13M59.500 566v13M107 574h13M113.500 568v13M163 576h13M169.500 570v13M218 578h13M224.500 572v13M275 580h13M281.500 574v13M329 581h13M335.500 575v13M385 583h13M391.500 577v13M440 583h13M446.500 577v13M495 583h13M501.500 577v13M551 583h13M557.500 577v13M606 581h13M612.500 575v13M660 582h13M666.500 576v13M715 579h13M721.500 573v13M771 578h13M777.500 572v13M826 577h13M832.500 571v13M882 574h13M888.500 568v13M937 571h13M943.500 565v13
M-2 633h13M4.500 627v13M50 637h13M56.500 631v13M105 638h13M111.500 632v13M162 640h13M168.500 634v13M216 643h13M222.500 637v13M272 644h13M278.500 638v13M329 646h13M335.500 640v13M383 647h13M389.500 641v13M439 648h13M445.500 642v13M495 648h13M501.500 642v13M551 648h13M557.500 642v13M606 646h13M612.500 640v13M661 644h13M667.500 638v13M717 644h13M723.500 638v13M773 642h13M779.500 636v13M828 640h13M834.500 634v13M885 638h13M891.500 632v13M940 634h13M946.500 628v13
M-4 695h13M2.500 689v13M46 699h13M52.500 693v13M103 703h13M109.500 697v13M159 704h13M165.500 698v13M215 708h13M221.500 702v13M272 709h13M278.500 703v13M329 709h13M335.500 703v13M383 711h13M389.500 705v13M439 711h13M445.500 705v13M495 711h13M501.500 705v13M551 711h13M557.500 705v13M607 710h13M613.500 704v13M663 709h13M669.500 703v13M719 708h13M725.500 702v13M775 705h13M781.500 699v13M832 704h13M838.500 698v13M887 702h13M893.500 696v13M943 699h13M949.500 693v13
M45 763h13M51.500 757v13M100 767h13M106.500 761v13M156 768h13M162.500 762v13M212 771h13M218.500 765v13M270 771h13M276.500 765v13M326 773h13M332.500 767v13M382 774h13M388.500 768v13M439 774h13M445.500 768v13M496 774h13M502.500 768v13M551 774h13M557.500 768v13M608 774h13M614.500 768v13M664 773h13M670.500 767v13M720 771h13M726.500 765v13M777 769h13M783.500 763v13M833 768h13M839.500 762v13M890 764h13M896.500 758v13M946 763h13M952.500 757v13"/>
<!-- white lake outlines -->
<g fill="none" stroke="#fff" stroke-width="1">
<polygon points="214,310 208,318 205,330 197,340 198,350 205,348 212,340 214,325 216,311"/>
<polyline points="253,490 300,478 322,470 330,460 350,460 355,470 345,480 322,490 295,500 270,505 255,500"/>
<polygon points="640,352 630,362 625,375 618,385 622,390 630,378 640,360"/>
<polygon points="727,117 733,125 733,142 727,135"/>
<polygon points="760,175 772,171 770,177 763,178"/>
<polyline points="804,78 812,82 808,85 814,85"/>
<polygon points="502,605 510,604 510,606 502,608"/>
<polygon points="525,604 528,604 528,612 525,610"/>
<polygon points="618,25 626,22 623,30 618,33"/>
<polygon points="386,862 391,866 389,869 385,866"/>
<polygon points="503,80 510,76 510,82 504,84"/>
</g>
<!-- header -->
<rect x="0" y="0" width="495" height="43" fill="#b4b4b4"/>
<path d="M1 43H495V0" fill="none" stroke="#555" stroke-width="1.5"/>
<g fill="none" stroke="#a8c0d8" stroke-width="1">
<polyline points="28,0 45,10 100,27 128,32 130,45"/>
<polyline points="160,30 172,50"/>
<polyline points="268,0 268,43"/>
<polyline points="400,0 405,15 423,37"/>
</g>
<text x="4" y="17" font-size="15" fill="#1c1c1c" textLength="420" lengthAdjust="spacing">ECMWF-INDEX-ANAL LCL-Height (m) Sunday 19-10-2025 16:40</text>
<text x="4" y="37" font-size="15" fill="#444" textLength="483" lengthAdjust="spacing">ECMWF-INDEX-ANAL WindShear_ (m/s) 0-1km Sunday 19-10-2025 16:40</text>
<!-- legend -->
<rect x="572" y="837" width="404" height="60" fill="#9c9c9c"/>
<g font-size="12.5" fill="#111" text-anchor="middle">
<text x="640" y="857" textLength="121">ECMWF-INDEX-ANAL</text>
<text x="640" y="874">LCL-Height</text>
<text x="640" y="891">m</text>
<text x="730" y="886">100</text><text x="772" y="886">400</text><text x="814" y="886">800</text><text x="856" y="886">1200</text><text x="898" y="886">1600</text><text x="940" y="886">2000</text>
</g>
<g stroke="#000" stroke-width="1" shape-rendering="crispEdges">
<rect x="709.500" y="844.500" width="21" height="22" fill="#fff"/>
<rect x="730.500" y="844.500" width="21" height="22" fill="#aaf"/>
<rect x="751.500" y="844.500" width="21" height="22" fill="#a5f"/>
<rect x="772.500" y="844.500" width="21" height="22" fill="#a0f"/>
<rect x="793.500" y="844.500" width="21" height="22" fill="#d4007f"/>
<rect x="814.500" y="844.500" width="21" height="22" fill="#f00"/>
<rect x="835.500" y="844.500" width="21" height="22" fill="#fa0"/>
<rect x="856.500" y="844.500" width="21" height="22" fill="#ff0"/>
<rect x="877.500" y="844.500" width="21" height="22" fill="#af0"/>
<rect x="898.500" y="844.500" width="21" height="22" fill="#5a0"/>
<rect x="919.500" y="844.500" width="21" height="22" fill="#00aa7f"/>
<rect x="940.500" y="844.500" width="21" height="22" fill="#0af"/>
<path fill="none" d="M730.500 866v7M772.500 866v7M814.500 866v7M856.500 866v7M898.500 866v7M940.500 866v7"/>
</g>
</svg>
</body></html>
